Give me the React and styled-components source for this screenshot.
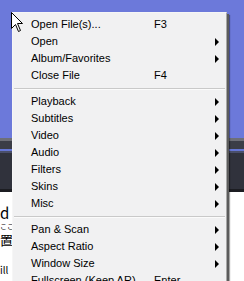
import React from "react";
import styled, { createGlobalStyle } from "styled-components";

const Global = createGlobalStyle`
  html, body { margin: 0; padding: 0; background: #ffffff; }
  body { font-family: "Liberation Sans", Arial, sans-serif; }
`;

const Page = styled.div`
  position: relative;
  width: 244px;
  height: 281px;
  overflow: hidden;
  display: flex;
  flex-direction: column;
`;

const Sky = styled.div`
  height: 138px;
  background: #6c79da;
  flex: none;
`;

const PlayerBar = styled.div`
  height: 54px;
  flex: none;
  display: flex;
  flex-direction: column;
  background: #30323d;
`;

const BarEdge = styled.div`
  height: ${(p) => p.$h}px;
  background: ${(p) => p.$c};
  flex: none;
`;

const Doc = styled.div`
  flex: 1;
  background: #ffffff;
  display: flex;
  flex-direction: column;
  padding-top: 13px;
  color: #000;
  font-family: "Noto Sans CJK JP", "Liberation Sans", sans-serif;
`;

const DocLine = styled.div`
  height: ${(p) => p.$h}px;
  font-size: ${(p) => p.$size}px;
  line-height: ${(p) => p.$h}px;
  padding-left: ${(p) => p.$x}px;
  white-space: nowrap;
`;

const Menu = styled.div`
  position: absolute;
  left: 12px;
  top: 12px;
  width: 213px;
  padding: 3px 0;
  background: #f1f1f2;
  border: 1px solid #f6f6f6;
  border-right-color: #a7a7a7;
  box-shadow: 2px 2px 0 0 #5c5c5c, 3px 3px 1px 0 rgba(0,0,0,0.35);
  font-family: "Liberation Sans", Arial, sans-serif;
  font-size: 11px;
  color: #000;
`;

const Row = styled.div`
  height: 17px;
  display: grid;
  grid-template-columns: 123px 1fr 8px;
  align-items: center;
  padding-left: 18px;
  padding-right: 3px;
  line-height: 17px;
  white-space: nowrap;
`;

const Label = styled.span``;
const Shortcut = styled.span``;

const Arrow = styled.span`
  width: 0;
  height: 0;
  border-top: 4px solid transparent;
  border-bottom: 4px solid transparent;
  border-left: 4px solid #000;
  justify-self: start;
`;

const Separator = styled.div`
  height: 9px;
  display: flex;
  align-items: center;
  padding: 0 1px;
  &::before {
    content: "";
    flex: 1;
    height: 1px;
    background: #c9c9c9;
    box-shadow: 0 1px 0 #fbfbfb;
  }
`;

const Cursor = styled.svg`
  position: absolute;
  left: 11px;
  top: 12px;
`;

const groups = [
  [
    { label: "Open File(s)...", key: "F3" },
    { label: "Open", sub: true },
    { label: "Album/Favorites", sub: true },
    { label: "Close File", key: "F4" },
  ],
  [
    { label: "Playback", sub: true },
    { label: "Subtitles", sub: true },
    { label: "Video", sub: true },
    { label: "Audio", sub: true },
    { label: "Filters", sub: true },
    { label: "Skins", sub: true },
    { label: "Misc", sub: true },
  ],
  [
    { label: "Pan & Scan", sub: true },
    { label: "Aspect Ratio", sub: true },
    { label: "Window Size", sub: true },
    { label: "Fullscreen (Keep AR)", key: "Enter" },
  ],
];

export default function App() {
  return (
    <>
      <Global />
      <Page>
        <Sky />
        <PlayerBar>
          <BarEdge $h={3} $c="#6e6f78" />
          <BarEdge $h={8} $c="#3b3d47" />
          <BarEdge $h={2} $c="#6576d6" />
          <BarEdge $h={2} $c="#4a4f6a" />
          <BarEdge $h={36} $c="#30323c" />
          <BarEdge $h={3} $c="#1c1d22" />
        </PlayerBar>
        <Doc>
          <DocLine $h={16} $size={15} $x={0}>d</DocLine>
          <DocLine $h={11} $size={7} $x={0}>ここ</DocLine>
          <DocLine $h={15} $size={13} $x={0}>置</DocLine>
          <DocLine $h={17} $size={10} $x={0}></DocLine>
          <DocLine $h={12} $size={10} $x={0}>ill</DocLine>
        </Doc>
        <Menu>
          {groups.map((g, gi) => (
            <React.Fragment key={gi}>
              {gi > 0 && <Separator />}
              {g.map((it) => (
                <Row key={it.label}>
                  <Label>{it.label}</Label>
                  <Shortcut>{it.key || ""}</Shortcut>
                  {it.sub ? <Arrow /> : <span />}
                </Row>
              ))}
            </React.Fragment>
          ))}
        </Menu>
        <Cursor width="13" height="21" viewBox="0 0 13 21">
          <path
            d="M0.5 0.5 L0.5 16.5 L4.5 12.5 L7.5 19.5 L9.5 18.5 L6.5 11.5 L11.5 11.5 Z"
            fill="#ffffff"
            stroke="#000000"
            strokeWidth="1"
            strokeLinejoin="miter"
          />
        </Cursor>
      </Page>
    </>
  );
}
